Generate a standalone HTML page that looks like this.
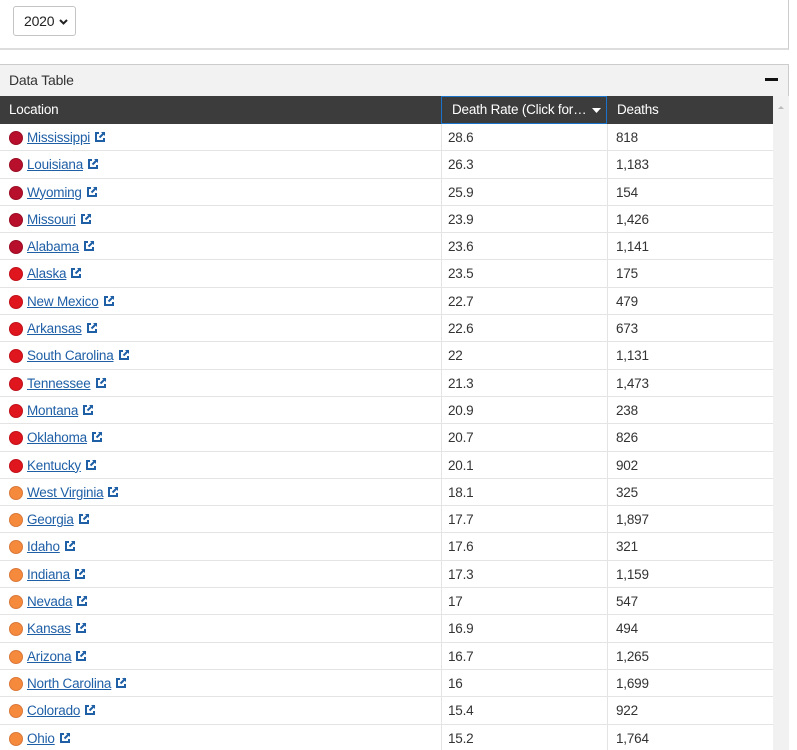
<!DOCTYPE html>
<html style="overflow:hidden;height:750px"><head><style>
body{margin:0;width:797px;height:750px;overflow:hidden;background:#fff;font-family:"Liberation Sans",Arial,sans-serif;font-size:13.5px;letter-spacing:-0.2px;color:#333;position:relative}
.sel{position:absolute;left:13px;top:6px;width:63px;height:30px;border:1px solid #c4c4c4;border-radius:3px;box-sizing:border-box;font-size:14px;line-height:28px;padding-left:10px;color:#222}
.sel svg{position:absolute;right:7px;top:12px}
.topbox{position:absolute;left:0;top:-2px;width:789px;height:52px;border-bottom:2px solid #ddd;border-right:1px solid #ccc;box-sizing:border-box}
.panel{position:absolute;left:0;top:64px;width:789px;height:700px;border:1px solid #ccc;border-left:none;box-sizing:border-box;background:#f2f2f2}
.ph{position:absolute;left:9px;top:72px;font-size:14px;color:#333}
.minus{position:absolute;left:765px;top:78px;width:13px;height:3px;background:#111}
.thead{position:absolute;left:0;top:96px;width:773px;height:28px;background:#3c3c3c;color:#fff}
.thead div{position:absolute;top:0;line-height:28px}
.sort{position:absolute;left:441px;top:96px;width:166px;height:28px;border:1px solid #1a73c8;box-sizing:border-box}
.tbody{position:absolute;left:0;top:124px;width:773px;background:#fff}
.row{height:27.3px;border-bottom:1px solid #e4e4e4;box-sizing:border-box;position:relative}
.row div{position:absolute;top:1px;line-height:26px}
.c2{left:448px}.c3{left:616px}
.vl{position:absolute;top:124px;width:1px;height:630px;background:#e4e4e4}
.dot{position:absolute;left:9px;top:7px;width:14px;height:14px;border-radius:50%}
.loc{left:27px}
.loc a{color:#1f5fa6;text-decoration:underline}
.loc svg{margin-left:4px;vertical-align:-1px}
.sb{position:absolute;left:773px;top:96px;width:16px;height:660px;background:#f1f1f1}
</style></head><body>
<div class="topbox"></div>
<div class="sel">2020<svg width="9" height="6" viewBox="0 0 9 6"><path d="M1 1l3.5 3.5L8 1" stroke="#222" stroke-width="2" fill="none"/></svg></div>
<div class="panel"></div>
<div class="ph">Data Table</div>
<div class="minus"></div>
<div class="sb"><svg width="16" height="14" style="position:absolute;top:4px"><path d="M5 9l3-3 3 3z" fill="#bbb"/></svg></div>
<div class="tbody">
<div id="rows"></div>
</div>
<div class="thead"><div style="left:9px">Location</div><div style="left:452px">Death Rate (Click for…</div><div style="left:617px">Deaths</div>
<svg style="position:absolute;left:592px;top:12px" width="9" height="5"><path d="M0 0h9L4.5 5z" fill="#fff"/></svg></div>
<div class="sort"></div>
<div class="vl" style="left:441px"></div>
<div class="vl" style="left:607px"></div>
<script>
var d=[["Mississippi","28.6","818",0],["Louisiana","26.3","1,183",0],["Wyoming","25.9","154",0],["Missouri","23.9","1,426",0],["Alabama","23.6","1,141",0],["Alaska","23.5","175",1],["New Mexico","22.7","479",1],["Arkansas","22.6","673",1],["South Carolina","22","1,131",1],["Tennessee","21.3","1,473",1],["Montana","20.9","238",1],["Oklahoma","20.7","826",1],["Kentucky","20.1","902",1],["West Virginia","18.1","325",2],["Georgia","17.7","1,897",2],["Idaho","17.6","321",2],["Indiana","17.3","1,159",2],["Nevada","17","547",2],["Kansas","16.9","494",2],["Arizona","16.7","1,265",2],["North Carolina","16","1,699",2],["Colorado","15.4","922",2],["Ohio","15.2","1,764",2]];
var col=["#b8102c","#e0161f","#f58a3c"],bd=["#9a0c22","#c01018","#d9783a"];
var ic='<svg width="12" height="12" viewBox="0 0 12 12"><path d="M5 2H2v8h8V7" stroke="#1f5fa6" stroke-width="2" fill="none"/><path d="M7 1h4v4z" fill="#1f5fa6"/><path d="M10.5 1.5L5.5 6.5" stroke="#1f5fa6" stroke-width="2"/></svg>';
var h="";d.forEach(function(r){h+='<div class="row"><span class="dot" style="background:'+col[r[3]]+';border:1px solid '+bd[r[3]]+';box-sizing:border-box"></span><div class="loc"><a>'+r[0]+'</a>'+ic+'</div><div class="c2">'+r[1]+'</div><div class="c3">'+r[2]+'</div></div>'});
document.getElementById("rows").innerHTML=h;
</script>
</body></html>
